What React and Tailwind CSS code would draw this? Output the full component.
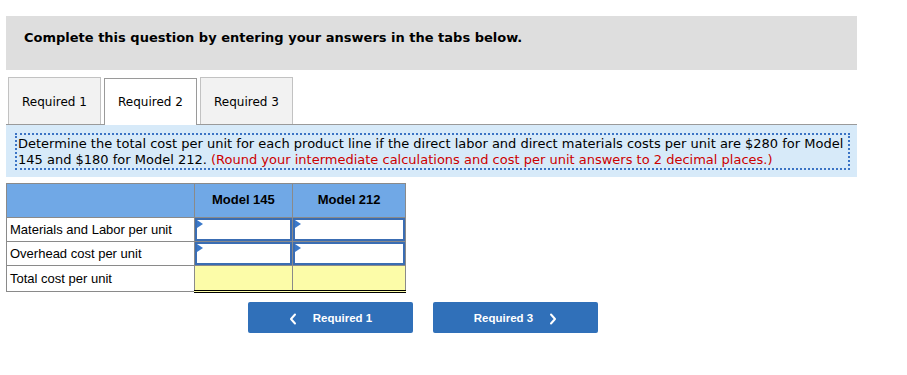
import React from "react";

const verdana = { fontFamily: '"DejaVu Sans", Verdana, sans-serif' };
const arial = { fontFamily: '"Liberation Sans", Arial, sans-serif' };

function InputCell() {
  return (
    <td className="border border-[#8a8a8a] p-0 h-[24px] bg-white">
      <div className="relative h-[23px] border-2 border-[#3a6db3] bg-white">
        <div className="absolute left-0 top-0 w-0 h-0 border-t-[4px] border-b-[4px] border-l-[6px] border-t-transparent border-b-transparent border-l-[#3a78c9]" />
      </div>
    </td>
  );
}

export default function App() {
  return (
    <div className="w-[907px] h-[375px] bg-white overflow-hidden">
      <div className="ml-[6px] w-[851px]">
        <div className="mt-[16px] h-[54px] bg-[#dedede] flex items-start pt-[14px] pl-[18px]">
          <span className="text-[13px] leading-[16px] font-bold text-black" style={verdana}>
            Complete this question by entering your answers in the tabs below.
          </span>
        </div>

        <div className="mt-[7px] h-[47px] flex items-end gap-[3px] pl-[2px]">
          <div className="h-[47px] w-[93px] border border-b-0 border-[#c2c2c2] bg-[#f2f2f2] flex items-center justify-center text-[12px] text-black" style={verdana}>
            <span className="mt-[1px]">Required 1</span>
          </div>
          <div className="relative h-[47px] w-[93px] border border-b-0 border-[#9a9a9a] bg-white flex items-center justify-center text-[12px] text-black z-10 -mb-[1px]" style={verdana}>
            <span className="mt-[-1px]">Required 2</span>
          </div>
          <div className="h-[47px] w-[93px] border border-b-0 border-[#c2c2c2] bg-[#f2f2f2] flex items-center justify-center text-[12px] text-black" style={verdana}>
            <span className="mt-[1px]">Required 3</span>
          </div>
        </div>

        <div className="border-t border-[#9a9a9a] bg-[#d7eaf9] h-[53px] pt-[8px] pl-[9px] pr-[7px]">
          <div className="border-2 border-dotted border-[#3b73c4] h-[37px] pl-[1px] pt-[1px] text-[13px] leading-[16px] text-black whitespace-nowrap" style={verdana}>
            Determine the total cost per unit for each product line if the direct labor and direct materials costs per unit are $280 for Model
            <br />
            145 and $180 for Model 212.{" "}
            <span className="text-[#cc0000]">(Round your intermediate calculations and cost per unit answers to 2 decimal places.)</span>
          </div>
        </div>

        <table className="mt-[6px] border-collapse w-[400px] text-[13px]" style={arial}>
          <colgroup>
            <col className="w-[188px]" />
            <col className="w-[99px]" />
            <col className="w-[113px]" />
          </colgroup>
          <thead>
            <tr className="h-[34px] bg-[#70a8e6]">
              <th className="border border-[#8a8a8a]"></th>
              <th className="border border-[#8a8a8a] font-bold text-black text-center align-middle pb-[2px]">Model 145</th>
              <th className="border border-[#8a8a8a] font-bold text-black text-center align-middle pb-[2px]">Model 212</th>
            </tr>
          </thead>
          <tbody>
            <tr className="h-[24px]">
              <td className="border border-[#8a8a8a] pl-[3px] text-black leading-[16px]">Materials and Labor per unit</td>
              <InputCell />
              <InputCell />
            </tr>
            <tr className="h-[24px]">
              <td className="border border-[#8a8a8a] pl-[3px] text-black leading-[16px]">Overhead cost per unit</td>
              <InputCell />
              <InputCell />
            </tr>
            <tr className="h-[26px]">
              <td className="border border-[#8a8a8a] pl-[3px] text-black leading-[16px]">Total cost per unit</td>
              <td className="border border-[#8a8a8a] border-b-[3px] border-b-black bg-[#fcfca8] p-0" style={{ borderBottomStyle: "double" }}></td>
              <td className="border border-[#8a8a8a] border-b-[3px] border-b-black bg-[#fcfca8] p-0" style={{ borderBottomStyle: "double" }}></td>
            </tr>
          </tbody>
        </table>

        <div className="mt-[9px] ml-[242px] flex gap-[20px]" style={arial}>
          <div className="w-[165px] h-[31px] pt-[3px] rounded-[2px] bg-[#3070b9] flex items-center justify-center gap-[16px] text-white text-[11.5px] font-bold">
            <svg width="8" height="12" viewBox="0 0 8 12" fill="none"><path d="M6 1.5 L2 6 L6 10.5" stroke="white" strokeWidth="2" strokeLinecap="round" strokeLinejoin="round" /></svg>
            <span>Required 1</span>
          </div>
          <div className="w-[165px] h-[31px] pt-[3px] rounded-[2px] bg-[#3070b9] flex items-center justify-center gap-[16px] text-white text-[11.5px] font-bold">
            <span>Required 3</span>
            <svg width="8" height="12" viewBox="0 0 8 12" fill="none"><path d="M2 1.5 L6 6 L2 10.5" stroke="white" strokeWidth="2" strokeLinecap="round" strokeLinejoin="round" /></svg>
          </div>
        </div>
      </div>
    </div>
  );
}
